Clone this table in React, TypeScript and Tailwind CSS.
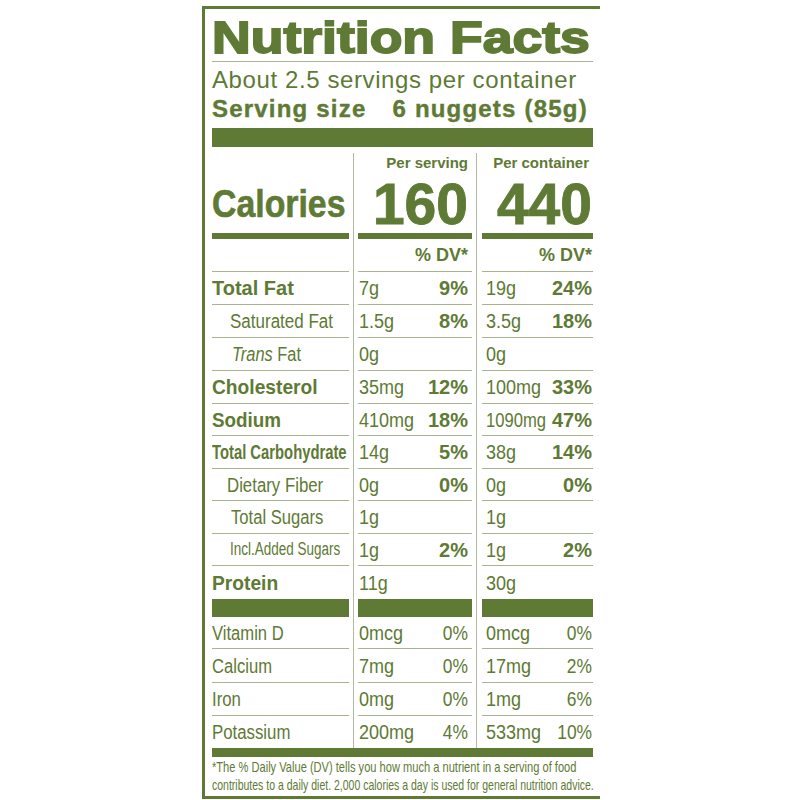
import React from "react";

type Row = {
  label: React.ReactNode;
  h: string;
  border: boolean;
  s: [string, string?];
  c: [string, string?];
  boldPct: boolean;
};

const rows: Row[] = [
  { label: <span className="text-[20px] font-bold">Total Fat</span>, h: "h-[33px]", border: true, s: ["7g", "9%"], c: ["19g", "24%"], boldPct: true },
  { label: <span className="pl-[18px] inline-block"><span className="inline-block origin-left scale-x-[0.85] text-[20px] whitespace-nowrap">Saturated Fat</span></span>, h: "h-[33px]", border: true, s: ["1.5g", "8%"], c: ["3.5g", "18%"], boldPct: true },
  { label: <span className="pl-[20px] inline-block"><span className="inline-block origin-left scale-x-[0.82] text-[20px] whitespace-nowrap"><i>Trans</i> Fat</span></span>, h: "h-[33px]", border: true, s: ["0g"], c: ["0g"], boldPct: true },
  { label: <span className="inline-block origin-left scale-x-[0.96] text-[20px] font-bold whitespace-nowrap">Cholesterol</span>, h: "h-[33px]", border: true, s: ["35mg", "12%"], c: ["100mg", "33%"], boldPct: true },
  { label: <span className="inline-block origin-left scale-x-[0.94] text-[20px] font-bold whitespace-nowrap">Sodium</span>, h: "h-[32px]", border: true, s: ["410mg", "18%"], c: ["1090mg", "47%"], boldPct: true },
  { label: <span className="inline-block origin-left scale-x-[0.74] text-[20px] font-bold whitespace-nowrap">Total Carbohydrate</span>, h: "h-[33px]", border: true, s: ["14g", "5%"], c: ["38g", "14%"], boldPct: true },
  { label: <span className="pl-[15px] inline-block"><span className="inline-block origin-left scale-x-[0.84] text-[20px] whitespace-nowrap">Dietary Fiber</span></span>, h: "h-[32px]", border: true, s: ["0g", "0%"], c: ["0g", "0%"], boldPct: true },
  { label: <span className="pl-[19px] inline-block"><span className="inline-block origin-left scale-x-[0.83] text-[20px] whitespace-nowrap">Total Sugars</span></span>, h: "h-[33px]", border: true, s: ["1g"], c: ["1g"], boldPct: true },
  { label: <span className="pl-[18px] inline-block"><span className="inline-block origin-left scale-x-[0.75] text-[18px] whitespace-nowrap">Incl.Added Sugars</span></span>, h: "h-[32px]", border: true, s: ["1g", "2%"], c: ["1g", "2%"], boldPct: true },
  { label: <span className="inline-block origin-left scale-x-[0.96] text-[20px] font-bold whitespace-nowrap">Protein</span>, h: "h-[33px]", border: false, s: ["11g"], c: ["30g"], boldPct: true },
];

const vits: Row[] = [
  { label: <span className="inline-block origin-left scale-x-[0.83] text-[20px] whitespace-nowrap">Vitamin D</span>, h: "h-[32px]", border: true, s: ["0mcg", "0%"], c: ["0mcg", "0%"], boldPct: false },
  { label: <span className="inline-block origin-left scale-x-[0.83] text-[20px] whitespace-nowrap">Calcium</span>, h: "h-[34px]", border: true, s: ["7mg", "0%"], c: ["17mg", "2%"], boldPct: false },
  { label: <span className="inline-block origin-left scale-x-[0.84] text-[20px] whitespace-nowrap">Iron</span>, h: "h-[33px]", border: true, s: ["0mg", "0%"], c: ["1mg", "6%"], boldPct: false },
  { label: <span className="inline-block origin-left scale-x-[0.84] text-[20px] whitespace-nowrap">Potassium</span>, h: "h-[32px]", border: false, s: ["200mg", "4%"], c: ["533mg", "10%"], boldPct: false },
];

function Value({ v }: { v: string }) {
  const long = v.length >= 6;
  return (
    <span className="inline-block w-[56px] whitespace-nowrap">
      <span
        className={
          long
            ? "inline-block origin-left scale-x-[0.83] text-[20px] whitespace-nowrap"
            : "inline-block origin-left scale-x-[0.9] text-[20px] whitespace-nowrap"
        }
      >
        {v}
      </span>
    </span>
  );
}

function Pct({ v, bold }: { v?: string; bold: boolean }) {
  if (!v) return null;
  if (bold) return <span className="text-[20px] font-bold whitespace-nowrap">{v}</span>;
  return <span className="inline-block origin-right scale-x-[0.87] text-[20px] whitespace-nowrap">{v}</span>;
}

function ValueCol({ which, pad }: { which: "s" | "c"; pad: string }) {
  const render = (r: Row, i: number) => {
    const d = which === "s" ? r.s : r.c;
    return (
      <div key={i} className={`${r.h} ${r.border ? "border-b border-[#aab38f]" : ""} flex items-center justify-between ${pad}`}>
        <Value v={d[0]} />
        <Pct v={d[1]} bold={r.boldPct} />
      </div>
    );
  };
  return (
    <>
      {rows.map(render)}
      <div className="h-[18px] bg-[#5e7a34]" />
      {vits.map(render)}
    </>
  );
}

function Divider() {
  return <div className="w-px mt-[6px] bg-[#b3b8a2]" />;
}

export default function App() {
  return (
    <div className="w-[800px] h-[800px] bg-white pt-[6px] [font-family:'Liberation_Sans',Arial,sans-serif] text-[#5e7a34]">
      <div className="ml-[202px] w-[398px] h-[793px] flex">
        <div className="w-[3px] bg-[#5e7a34]" />
        <div className="flex-1 flex flex-col">
          <div className="h-[3px] bg-[#5e7a34]" />
          <div className="flex-1 pl-[7px]">
            <div className="w-[381px] flex flex-col">
              <div className="h-[52px] pt-[6px]">
                <span className="inline-block origin-left scale-x-[1.19] text-[45px] leading-[45px] font-bold whitespace-nowrap [-webkit-text-stroke:1.8px_#5e7a34]">
                  Nutrition Facts
                </span>
              </div>
              <div className="h-px bg-[#aab38f]" />
              <div className="mt-[6px] text-[24px] leading-[24px] tracking-[0.6px] whitespace-nowrap">
                About 2.5 servings per container
              </div>
              <div className="mt-[5px] text-[24px] leading-[24px] font-bold tracking-[1.2px] whitespace-nowrap [-webkit-text-stroke:0.4px_#5e7a34]">
                <span>Serving size</span>
                <span className="ml-[26px]">6 nuggets (85g)</span>
              </div>
              <div className="mt-[7px] h-[19px] bg-[#5e7a34]" />

              <div className="flex h-[601px]">
                <div className="w-[137px] flex flex-col">
                  <div className="h-[86px] flex items-end pb-[10px]">
                    <span className="inline-block origin-left scale-x-[0.89] text-[38px] leading-[38px] font-bold whitespace-nowrap [-webkit-text-stroke:0.6px_#5e7a34]">
                      Calories
                    </span>
                  </div>
                  <div className="h-[6px] bg-[#5e7a34]" />
                  <div className="h-[33px] border-b border-[#aab38f]" />
                  {rows.map((r, i) => (
                    <div key={i} className={`${r.h} ${r.border ? "border-b border-[#aab38f]" : ""} flex items-center`}>
                      {r.label}
                    </div>
                  ))}
                  <div className="h-[18px] bg-[#5e7a34]" />
                  {vits.map((r, i) => (
                    <div key={i} className={`${r.h} ${r.border ? "border-b border-[#aab38f]" : ""} flex items-center`}>
                      {r.label}
                    </div>
                  ))}
                </div>

                <div className="ml-[4px] mr-[4px] flex">
                  <Divider />
                </div>

                <div className="w-[114px] flex flex-col">
                  <div className="h-[86px] flex flex-col items-end justify-between pt-[8px] pr-[4px] pb-[8px]">
                    <span className="text-[15px] leading-[15px] font-bold whitespace-nowrap">Per serving</span>
                    <span className="text-[57px] leading-[42px] font-bold [-webkit-text-stroke:0.9px_#5e7a34]">160</span>
                  </div>
                  <div className="h-[6px] bg-[#5e7a34]" />
                  <div className="h-[33px] border-b border-[#aab38f] flex items-center justify-end pr-[4px]">
                    <span className="text-[18px] font-bold whitespace-nowrap">% DV*</span>
                  </div>
                  <ValueCol which="s" pad="pl-[1px] pr-[4px]" />
                </div>

                <div className="ml-[4px] mr-[5px] flex">
                  <Divider />
                </div>

                <div className="w-[111px] flex flex-col">
                  <div className="h-[86px] flex flex-col items-end justify-between pt-[8px] pr-[1px] pb-[8px]">
                    <span className="mr-[3px] text-[15px] leading-[15px] font-bold whitespace-nowrap">Per container</span>
                    <span className="text-[57px] leading-[42px] font-bold [-webkit-text-stroke:0.9px_#5e7a34]">440</span>
                  </div>
                  <div className="h-[6px] bg-[#5e7a34]" />
                  <div className="h-[33px] border-b border-[#aab38f] flex items-center justify-end pr-[1px]">
                    <span className="text-[18px] font-bold whitespace-nowrap">% DV*</span>
                  </div>
                  <ValueCol which="c" pad="pl-[4px] pr-[1px]" />
                </div>
              </div>

              <div className="h-[9px] bg-[#5e7a34]" />
              <div className="pt-[1px] text-[15px] leading-[18px]">
                <div className="whitespace-nowrap">
                  <span className="inline-block origin-left scale-x-[0.74]">
                    *The % Daily Value (DV) tells you how much a nutrient in a serving of food
                  </span>
                </div>
                <div className="whitespace-nowrap">
                  <span className="inline-block origin-left scale-x-[0.70]">
                    contributes to a daily diet. 2,000 calories a day is used for general nutrition advice.
                  </span>
                </div>
              </div>
            </div>
          </div>
          <div className="h-[3px] bg-[#5e7a34]" />
        </div>
      </div>
    </div>
  );
}
